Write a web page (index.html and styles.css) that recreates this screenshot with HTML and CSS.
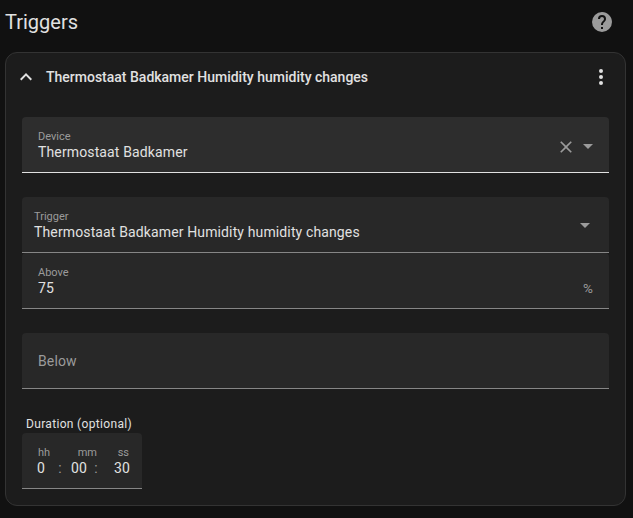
FILE: index.html
```html
<!DOCTYPE html>
<html lang="en">
<head>
<meta charset="utf-8">
<title>Triggers</title>
<link rel="stylesheet" href="styles.css">
</head>
<body>
<header class="section-header">
  <h1>Triggers</h1>
  <svg class="icon help" viewBox="0 0 24 24"><path d="M15.07,11.25L14.17,12.17C13.45,12.89 13,13.5 13,15H11V14.5C11,13.39 11.45,12.39 12.17,11.67L13.41,10.41C13.78,10.05 14,9.55 14,9C14,7.89 13.1,7 12,7A2,2 0 0,0 10,9H8A4,4 0 0,1 12,5A4,4 0 0,1 16,9C16,9.88 15.64,10.67 15.07,11.25M13,19H11V17H13M12,2A10,10 0 0,0 2,12A10,10 0 0,0 12,22A10,10 0 0,0 22,12C22,6.47 17.5,2 12,2Z"/></svg>
</header>
<main class="card">
  <div class="card-header">
    <svg class="icon chevron" viewBox="0 0 24 24"><path d="M7.41,15.41L12,10.83L16.59,15.41L18,14L12,8L6,14L7.41,15.41Z"/></svg>
    <h2>Thermostaat Badkamer Humidity humidity changes</h2>
    <svg class="icon menu" viewBox="0 0 24 24"><path d="M12,16A2,2 0 0,1 14,18A2,2 0 0,1 12,20A2,2 0 0,1 10,18A2,2 0 0,1 12,16M12,10A2,2 0 0,1 14,12A2,2 0 0,1 12,14A2,2 0 0,1 10,12A2,2 0 0,1 12,10M12,4A2,2 0 0,1 14,6A2,2 0 0,1 12,8A2,2 0 0,1 10,6A2,2 0 0,1 12,4Z"/></svg>
  </div>
  <div class="field device">
    <div class="text"><span class="label">Device</span><span class="value">Thermostaat Badkamer</span></div>
    <svg class="clear" viewBox="0 0 24 24"><path d="M19,6.41L17.59,5L12,10.59L6.41,5L5,6.41L10.59,12L5,17.59L6.41,19L12,13.41L17.59,19L19,17.59L13.41,12L19,6.41Z"/></svg>
    <svg class="arrow" viewBox="0 0 10 5"><path d="M0,0H10L5,5Z"/></svg>
  </div>
  <div class="field trigger">
    <div class="text"><span class="label">Trigger</span><span class="value">Thermostaat Badkamer Humidity humidity changes</span></div>
    <svg class="arrow" viewBox="0 0 10 5"><path d="M0,0H10L5,5Z"/></svg>
  </div>
  <div class="field">
    <div class="text"><span class="label">Above</span><span class="value">75</span></div>
    <span class="suffix">%</span>
  </div>
  <div class="field below"><span class="placeholder">Below</span></div>
  <div class="duration-label">Duration (optional)</div>
  <div class="field duration">
    <div class="unit hours"><span class="label">hh</span><span class="value">0</span></div>
    <span class="colon">:</span>
    <div class="unit minutes"><span class="label">mm</span><span class="value">00</span></div>
    <span class="colon">:</span>
    <div class="unit seconds"><span class="label">ss</span><span class="value">30</span></div>
  </div>
</main>
</body>
</html>
```
FILE: styles.css
```css
* { box-sizing: border-box; }
body {
  margin: 0;
  height: 518px;
  overflow: hidden;
  background: #111;
  color: #e1e1e1;
  font-family: Roboto, "Liberation Sans", sans-serif;
  font-size: 14px;
}
h1, h2 { margin: 0; }
svg { display: block; flex: none; fill: currentColor; }
.icon { width: 24px; height: 24px; }
.section-header {
  display: flex;
  align-items: center;
  justify-content: space-between;
  height: 52px;
  padding: 0 19px 8px 5px;
}
h1 { font-size: 20px; font-weight: 400; line-height: 28px; }
.help { color: #9b9b9b; }
.card {
  width: 621px;
  height: 454px;
  margin-left: 5px;
  padding: 0 16px;
  border: 1px solid #333;
  border-radius: 12px;
  background: #1c1c1c;
}
.card-header { display: flex; align-items: center; height: 48px; margin: 0 -4px 16px -8px; }
.chevron { width: 24px; margin-right: 8px; }
h2 { flex: 1; font-size: 14px; font-weight: 500; line-height: 20px; }
.field {
  display: flex;
  height: 56px;
  padding: 0 16px;
  border-bottom: 1px solid #868686;
  border-radius: 4px 4px 0 0;
  background: #282828;
}
.device { margin-bottom: 24px; border-color: #e1e1e1; background: #2d2d2d; }
.trigger { padding-left: 12px; }
.text { flex: 1; }
.text, .unit { display: flex; flex-direction: column; padding-top: 13px; }
.label { color: #9b9b9b; font-size: 11px; line-height: 14px; }
.value { margin-top: -1px; font-size: 14px; line-height: 18px; letter-spacing: .13px; }
.clear { width: 20px; height: 20px; margin: 20px 7px 0 0; color: #9b9b9b; }
.arrow { width: 10px; height: 5px; margin-top: 27px; color: #9b9b9b; }
.trigger .arrow { margin-top: 26px; margin-right: 3px; }
.suffix { align-self: center; padding-top: 15px; color: #9b9b9b; font-size: 13.5px; }
.below { align-items: center; margin-top: 24px; }
.placeholder { color: #9b9b9b; letter-spacing: .13px; }
.duration-label { height: 44px; padding: 26px 4px 0; font-size: 12px; line-height: 18px; letter-spacing: .33px; }
.duration { width: 120px; padding-right: 12px; }
.hours { width: 12px; }
.hours .value { margin-left: -1px; }
.minutes { width: 27px; }
.minutes .label, .seconds { text-align: right; }
.seconds { width: 29px; }
.seconds .label { padding-right: 1px; }
.colon { width: 20px; padding-top: 26px; color: #9b9b9b; line-height: 18px; text-align: center; }
.minutes + .colon { width: 10px; margin-left: -6px; }
.minutes .value { padding-left: 1px; }
```
